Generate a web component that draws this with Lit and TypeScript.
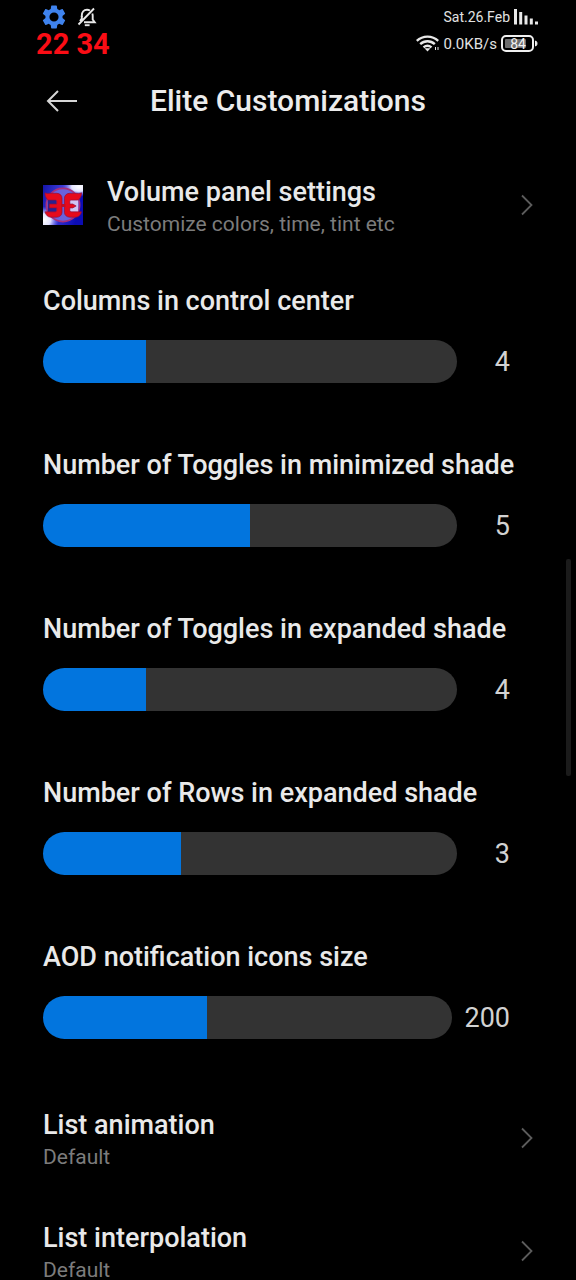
import { LitElement, html, css } from "lit";
import { customElement, property } from "lit/decorators.js";
import { styleMap } from "lit/directives/style-map.js";

@customElement("status-bar")
class StatusBar extends LitElement {
  static styles = css`
    :host {
      display: flex;
      justify-content: space-between;
      height: 58px;
      padding: 5px 38px 0 36px;
      box-sizing: border-box;
      color: #e2e2e2;
    }
    .side {
      display: flex;
      flex-direction: column;
    }
    .right {
      align-items: flex-end;
    }
    .line {
      display: flex;
      align-items: center;
      height: 25px;
    }
    .notices {
      gap: 11px;
      padding-left: 6px;
    }
    .clock {
      color: #fb0d15;
      font-size: 29px;
      font-weight: 700;
      line-height: 30px;
      white-space: nowrap;
    }
    .date {
      font-size: 14px;
      gap: 4px;
    }
    .net {
      font-size: 15px;
      gap: 4px;
      height: 30px;
    }
    svg {
      display: block;
    }
    .level {
      font-size: 14px;
    }
  `;
  render() {
    return html`
      <div class="side">
        <div class="line notices">
          <svg width="24" height="24" viewBox="1.5 1.5 21 21" fill="#3f83ee" aria-hidden="true">
            <path
              d="M19.43 12.98c.04-.32.07-.64.07-.98s-.03-.66-.07-.98l2.11-1.65c.19-.15.24-.42.12-.64l-2-3.46c-.12-.22-.39-.3-.61-.22l-2.49 1c-.52-.4-1.08-.73-1.69-.98l-.38-2.65A.49.49 0 0 0 14 2h-4c-.25 0-.46.18-.49.42l-.38 2.65c-.61.25-1.17.59-1.69.98l-2.49-1c-.23-.09-.49 0-.61.22l-2 3.46c-.13.22-.07.49.12.64l2.11 1.65c-.04.32-.07.65-.07.98s.03.66.07.98l-2.11 1.65c-.19.15-.24.42-.12.64l2 3.46c.12.22.39.3.61.22l2.49-1c.52.4 1.08.73 1.69.98l.38 2.65c.03.24.24.42.49.42h4c.25 0 .46-.18.49-.42l.38-2.65c.61-.25 1.17-.59 1.69-.98l2.49 1c.23.09.49 0 .61-.22l2-3.46c.12-.22.07-.49-.12-.64zM12 16a4 4 0 1 1 0-8 4 4 0 0 1 0 8z"
            />
          </svg>
          <svg width="20" height="20" viewBox="0 0 20 20" fill="none" stroke="#e8e8e8" stroke-width="1.900" aria-hidden="true">
            <path d="M4.800 10V8.500C4.800 5.200 6.800 2.700 10 2.700c1.200 0 2.200.3 3 .8M15.300 6.500c.3.8.4 1.500.4 2.300v3.700l2 2.700H7" />
            <path d="M1.500 17.500L17 1.500M4.800 9v2.500L3 14" />
            <path d="M7.800 18.200h4.800" />
          </svg>
        </div>
        <div class="clock">22 34</div>
      </div>
      <div class="side right">
        <div class="line date">
          <span>Sat.26.Feb</span>
          <svg width="24" height="16" viewBox="0 0 24 16" fill="#e8e8e8" aria-hidden="true">
            <path d="M0 0h3v15.500H0zM5.200 3h3v12.500h-3zM10.500 6.500h3v9h-3zM15.800 9.500h3v6h-3zM21 12.500h3v3h-3z" />
          </svg>
        </div>
        <div class="line net">
          <svg width="23" height="17" viewBox="0 0 23 17" fill="none" stroke="#e8e8e8" stroke-width="2.400" aria-hidden="true">
            <path d="M.8 5.800c6-5.600 15.400-5.600 21.400 0M4.200 9.200c4.200-3.900 10.400-3.900 14.600 0M7.500 12.300c2.400-2 5.600-2 8 0" />
            <path d="M8.500 13.200L11.500 16.500l3-3.300z" fill="#e8e8e8" stroke="none" />
            <path d="M19.500 12v3M22 12v3" stroke-width="1" />
          </svg>
          <span>0.0KB/s</span>
          <svg width="37" height="17" viewBox="0 0 37 17" role="img" aria-label="Battery 84">
            <rect x="1" y="1" width="31" height="15" rx="4" fill="none" stroke="#f0f0f0" stroke-width="2" />
            <rect x="4" y="4" width="21" height="9" rx="1" fill="#6c6c6c" />
            <path d="M34.500 6c2 .5 2 4.500 0 5z" fill="#f0f0f0" stroke="#f0f0f0" />
            <text class="level" x="17" y="13.500" text-anchor="middle" fill="#f2f2f2">84</text>
          </svg>
        </div>
      </div>
    `;
  }
}

@customElement("link-row")
class LinkRow extends LitElement {
  @property() heading = "";
  @property() summary = "";
  static styles = css`
    :host {
      display: block;
    }
    .row {
      display: flex;
      align-items: center;
      width: 100%;
      height: 113px;
      padding: 0 43px;
      border: 0;
      background: none;
      color: inherit;
      font: inherit;
      text-align: left;
    }
    .text {
      flex: 1;
      display: flex;
      flex-direction: column;
      padding-top: 4px;
    }
    .heading {
      font-size: 27px;
      font-weight: 500;
      line-height: 34px;
      color: #e9e9e9;
    }
    .summary {
      font-size: 21px;
      line-height: 30px;
      color: #7c7c7c;
    }
    ::slotted(svg) {
      display: block;
      margin-right: 24px;
    }
  `;
  render() {
    return html`
      <button class="row" type="button">
        <slot></slot>
        <span class="text">
          <span class="heading">${this.heading}</span>
          <span class="summary">${this.summary}</span>
        </span>
        <svg width="12" height="22" viewBox="0 0 12 22" fill="none" stroke="#5c5c5c" stroke-width="1.800" aria-hidden="true">
          <path d="M1 1.500L10.500 11 1 20.500" />
        </svg>
      </button>
    `;
  }
}

@customElement("slider-row")
class SliderRow extends LitElement {
  @property() heading = "";
  @property({ type: Number }) min = 0;
  @property({ type: Number }) max = 10;
  @property({ type: Number }) value = 0;
  static styles = css`
    :host {
      display: block;
      padding: 23px 66px 42px 43px;
    }
    .heading {
      display: block;
      font-size: 27px;
      font-weight: 500;
      line-height: 34px;
      color: #e9e9e9;
      margin-bottom: 22px;
      white-space: nowrap;
    }
    .control {
      display: flex;
      align-items: center;
      gap: 12px;
    }
    .track {
      appearance: none;
      flex: 1;
      min-width: 0;
      height: 43px;
      margin: 0;
      border-radius: 22px;
      background: linear-gradient(to right, #0275de var(--fill), #333 var(--fill));
    }
    .track::-webkit-slider-thumb {
      appearance: none;
      width: 1px;
      height: 43px;
      background: transparent;
    }
    .value {
      min-width: 41px;
      font-size: 27px;
      line-height: 34px;
      color: #d2d2d2;
      text-align: right;
    }
  `;
  private onInput(e: Event) {
    this.value = Number((e.target as HTMLInputElement).value);
  }
  render() {
    const fill = ((this.value - this.min) / (this.max - this.min)) * 100;
    return html`
      <label class="heading" for="range">${this.heading}</label>
      <div class="control">
        <input
          id="range"
          class="track"
          type="range"
          min=${this.min}
          max=${this.max}
          .value=${String(this.value)}
          style=${styleMap({ "--fill": `${fill}%` })}
          @input=${this.onInput}
        />
        <output class="value" for="range">${this.value}</output>
      </div>
    `;
  }
}

const sliders = [
  { heading: "Columns in control center", min: 3, max: 7, value: 4 },
  { heading: "Number of Toggles in minimized shade", min: 3, max: 7, value: 5 },
  { heading: "Number of Toggles in expanded shade", min: 3, max: 7, value: 4 },
  { heading: "Number of Rows in expanded shade", min: 2, max: 5, value: 3 },
  { heading: "AOD notification icons size", min: 0, max: 500, value: 200 },
];

@customElement("app-root")
class AppRoot extends LitElement {
  static styles = css`
    :host {
      display: block;
      position: relative;
      height: 100vh;
      overflow: hidden;
      background: #000;
      color: #e9e9e9;
      font-family: Roboto, "Noto Sans", sans-serif;
    }
    .bar {
      display: grid;
      grid-template-columns: 1fr auto 1fr;
      align-items: center;
      height: 86px;
      margin-bottom: 4px;
      padding: 0 46px;
    }
    .back {
      justify-self: start;
      padding: 0;
      border: 0;
      background: none;
    }
    .back svg {
      display: block;
    }
    .title {
      margin: 0;
      font-size: 30px;
      font-weight: 500;
      line-height: 38px;
      color: #ececec;
    }
    .scroll {
      position: absolute;
      top: 559px;
      right: 5px;
      width: 5px;
      height: 217px;
      border-radius: 2px;
      background: #1b1b1b;
    }
  `;
  render() {
    return html`
      <status-bar></status-bar>
      <header class="bar">
        <button class="back" type="button" aria-label="Back">
          <svg width="32" height="22" viewBox="0 0 32 22" fill="none" stroke="#d6d6d6" stroke-width="2">
            <path d="M12 1L2 11l10 10M2 11h29" />
          </svg>
        </button>
        <h1 class="title">Elite Customizations</h1>
      </header>
      <main>
        <link-row heading="Volume panel settings" summary="Customize colors, time, tint etc">
          <svg width="40" height="40" viewBox="0 0 41 41" aria-hidden="true">
            <defs>
              <linearGradient id="sky" x1="0" y1="0" x2="1" y2="0.300">
                <stop offset="0" stop-color="#1414a8" />
                <stop offset="0.450" stop-color="#3c3cd8" />
                <stop offset="1" stop-color="#0c0cb4" />
              </linearGradient>
              <radialGradient id="glow">
                <stop offset="0" stop-color="#fff" />
                <stop offset="0.450" stop-color="#e4e4ff" />
                <stop offset="1" stop-color="#8888ff" stop-opacity="0" />
              </radialGradient>
            </defs>
            <rect width="41" height="41" fill="url(#sky)" />
            <ellipse cx="37" cy="2" rx="17" ry="10" fill="url(#glow)" />
            <ellipse cx="1" cy="36" rx="15" ry="14" fill="url(#glow)" />
            <circle cx="20.500" cy="20.500" r="17" fill="#6a62dc" stroke="#a8307c" stroke-width="1.800" />
            <path d="M5 14h9v14H5z" fill="#2a2090" />
            <path d="M26 14h10v14H26z" fill="#d0c4f4" />
            <path
              d="M2 8c2 1 4 .5 7 .5h5c3 0 5.500 2 5.500 5V28c0 3-2.500 5-5.500 5H8c-3 0-5-2-6-5.500h10c1.500 0 2-.5 2-1.500v-2.500H6.500v-4H14V17c0-1-.5-1.500-2-1.500H6.500C4 15.500 2 12 2 8z"
              fill="#e60a1c" stroke="#8c1040" stroke-width="0.700"
            />
            <path
              d="M39.500 8c-2 1-4 .5-7 .5h-5c-3 0-5.500 2-5.500 5V28c0 3 2.500 5 5.500 5h6c3 0 5-2 6-5.500h-10c-1.500 0-2-.5-2-1.500v-2.500h3l3.500-2-3.500-2h-3V17c0-1 .5-1.500 2-1.500H35c2.500 0 4.500-3.500 4.500-7.500z"
              fill="#e60a1c" stroke="#8c1040" stroke-width="0.700"
            />
            <path d="M19 19.500h4v3h-4z" fill="#c00c28" />
          </svg>
        </link-row>
        ${sliders.map(
          (s) => html`<slider-row heading=${s.heading} .min=${s.min} .max=${s.max} .value=${s.value}></slider-row>`
        )}
        <link-row heading="List animation" summary="Default"></link-row>
        <link-row heading="List interpolation" summary="Default"></link-row>
      </main>
      <div class="scroll"></div>
    `;
  }
}
